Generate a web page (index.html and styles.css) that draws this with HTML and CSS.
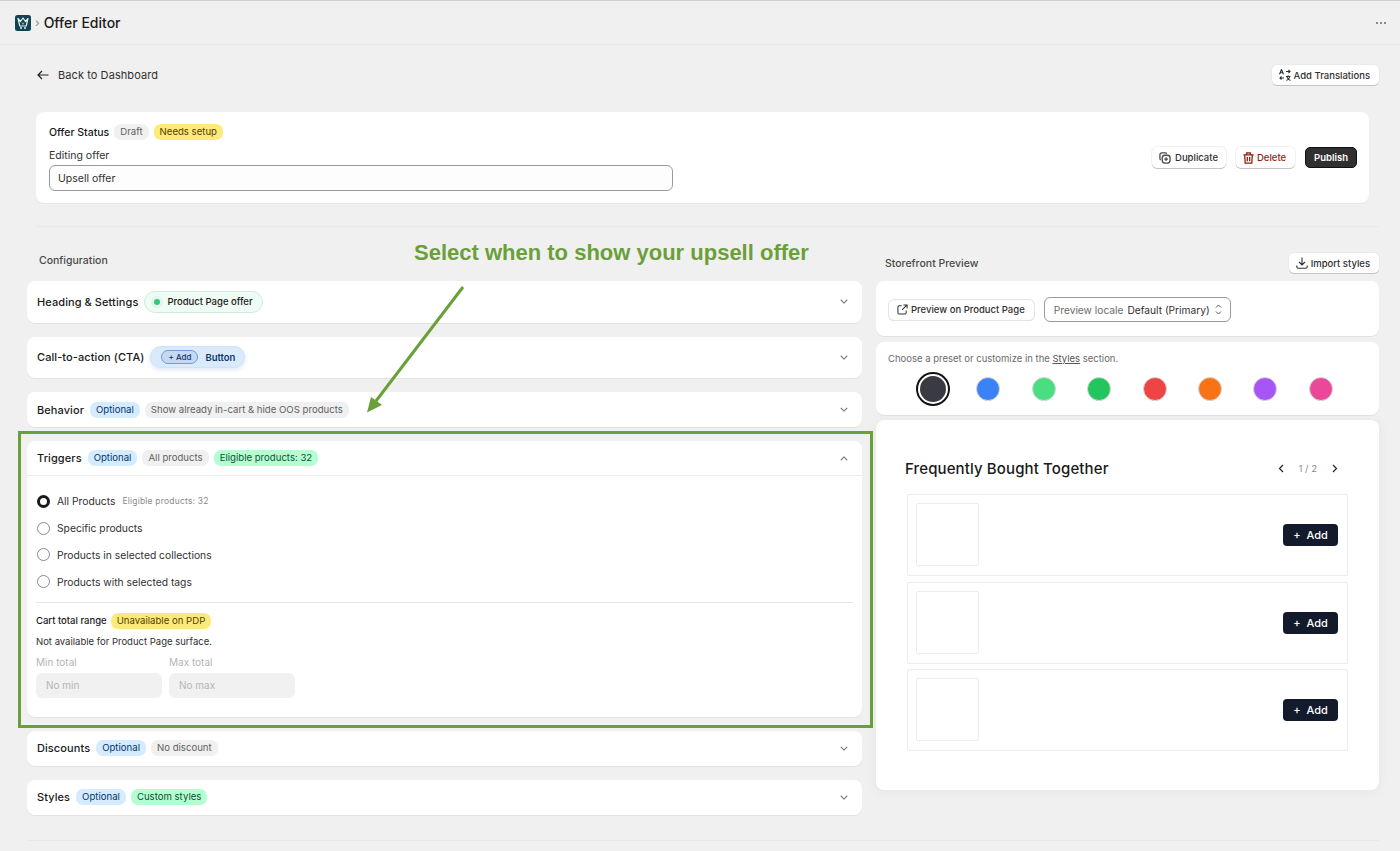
FILE: index.html
```html
<!doctype html>
<html lang="en">
  <head>
    <meta charset="UTF-8" />
    <meta name="viewport" content="width=device-width, initial-scale=1.0" />
    <title>Offer Editor</title>
    <link rel="stylesheet" href="styles.css">
  </head>
  <body>
    <header class="topbar">
      <div class="crumbs">
        <svg class="logo" width="16" height="16" viewBox="0 0 16 16">
          <rect width="16" height="16" rx="2.5" fill="#134252" />
          <path d="M3 3.500l1.800 7.500h6.400L13 3.500l-2.500 3L8 3 5.500 6.500z" fill="none" stroke="#e8f1f0" stroke-width="1.200" stroke-linejoin="round" />
          <path d="M7 7.500l1 2 1-2" fill="none" stroke="#7fb6c4" stroke-width="0.900" />
          <circle cx="6" cy="13" r="1" fill="#e8f1f0" />
          <circle cx="10" cy="13" r="1" fill="#e8f1f0" />
        </svg>
        <span class="crumb-sep">›</span>
        <span class="page-title">Offer Editor</span>
      </div>
      <div class="dots"><i></i><i></i><i></i></div>
    </header>

    <main class="page">
      <div class="back-row">
        <a class="back">
          <svg width="12" height="10" viewBox="0 0 12 10" fill="none" stroke="#1f2328" stroke-width="1.2"><path d="M11.5 5H1M5 1L1 5l4 4" /></svg>
          Back to Dashboard
        </a>
        <button class="btn">
          <svg width="12" height="12" viewBox="0 0 12 12" fill="none" stroke="#303030" stroke-width="1.100"><path d="M0.500 5.200L2.500 0.500 4.500 5.200M1.200 3.800h2.600M7 2.500h4M9.500 1L11 2.500 9.500 4M5 9H1M2.500 7.500L1 9l1.500 1.500M7 7.500h4.500M9.200 6.500v1M7.500 11.500C9.500 10.500 10.500 9 10.800 7.500M7.800 7.500c.4 1.800 2 3.300 3.700 4" /></svg>
          Add Translations
        </button>
      </div>

      <section class="status-card">
        <div class="status-left">
          <div class="status-line">
            <strong>Offer Status</strong>
            <span class="tag gray">Draft</span>
            <span class="tag yellow">Needs setup</span>
          </div>
          <label class="field-label">Editing offer</label>
          <div class="text-input">Upsell offer</div>
        </div>
        <div class="status-actions">
          <button class="btn tall">
            <svg width="12" height="12" viewBox="0 0 13 13" fill="none" stroke="#4a4a4a" stroke-width="1.400"><path d="M8.500 1.800A2 2 0 0 0 7 1H3a2 2 0 0 0-2 2v4c0 .7.3 1.200.8 1.600" /><rect x="3.500" y="3.500" width="8.500" height="8.500" rx="3" /><path d="M7.700 5.800v4M5.700 7.800h4" /></svg>
            Duplicate
          </button>
          <button class="btn tall danger">
            <svg width="11" height="12" viewBox="0 0 12 13" fill="none" stroke="#8e1f0b" stroke-width="1.400"><path d="M0.500 3h11M4 3V1h4v2M1.800 3l.6 9.200h7.200l.6-9.200M4.700 5.500v4.500M7.300 5.500v4.500" /></svg>
            Delete
          </button>
          <button class="btn tall dark">Publish</button>
        </div>
      </section>

      <hr class="rule" />

      <div class="columns">
        <div class="col-left">
          <div class="col-head"><h2 class="col-title">Configuration</h2></div>

          <section class="acc h41">
            <div class="acc-head">
              <span class="acc-title">Heading &amp; Settings</span>
              <span class="pill-mint"><i class="live-dot"></i>Product Page offer</span>
              <svg class="chev" width="8" height="5" viewBox="0 0 10 6"><path d="M1 1l4 4 4-4" /></svg>
            </div>
          </section>

          <section class="acc h41">
            <div class="acc-head">
              <span class="acc-title">Call-to-action (CTA)</span>
              <span class="pill-cta"><span class="mini-add">+ Add</span>Button</span>
              <svg class="chev" width="8" height="5" viewBox="0 0 10 6"><path d="M1 1l4 4 4-4" /></svg>
            </div>
          </section>

          <section class="acc">
            <div class="acc-head">
              <span class="acc-title">Behavior</span>
              <span class="tag blue">Optional</span>
              <span class="tag gray">Show already in-cart &amp; hide OOS products</span>
              <svg class="chev" width="8" height="5" viewBox="0 0 10 6"><path d="M1 1l4 4 4-4" /></svg>
            </div>
          </section>

          <section class="acc">
            <div class="acc-head open">
              <span class="acc-title">Triggers</span>
              <span class="tag blue">Optional</span>
              <span class="tag gray">All products</span>
              <span class="tag green">Eligible products: 32</span>
              <svg class="chev" width="8" height="5" viewBox="0 0 10 6"><path d="M1 5l4-4 4 4" /></svg>
            </div>
            <div class="acc-body">
              <div class="radio-row"><i class="radio on"></i>All Products <small>Eligible products: 32</small></div>
              <div class="radio-row"><i class="radio"></i>Specific products</div>
              <div class="radio-row"><i class="radio"></i>Products in selected collections</div>
              <div class="radio-row"><i class="radio"></i>Products with selected tags</div>
              <hr class="inner-rule" />
              <div class="cart-line"><strong>Cart total range</strong><span class="tag yellow">Unavailable on PDP</span></div>
              <p class="cart-note">Not available for Product Page surface.</p>
              <div class="range">
                <div class="range-field"><label>Min total</label><div class="range-input">No min</div></div>
                <div class="range-field"><label>Max total</label><div class="range-input">No max</div></div>
              </div>
            </div>
          </section>

          <section class="acc">
            <div class="acc-head">
              <span class="acc-title">Discounts</span>
              <span class="tag blue">Optional</span>
              <span class="tag gray">No discount</span>
              <svg class="chev" width="8" height="5" viewBox="0 0 10 6"><path d="M1 1l4 4 4-4" /></svg>
            </div>
          </section>

          <section class="acc">
            <div class="acc-head">
              <span class="acc-title">Styles</span>
              <span class="tag blue">Optional</span>
              <span class="tag green">Custom styles</span>
              <svg class="chev" width="8" height="5" viewBox="0 0 10 6"><path d="M1 1l4 4 4-4" /></svg>
            </div>
          </section>
        </div>

        <div class="col-right">
          <div class="col-head between">
            <h2 class="col-title">Storefront Preview</h2>
            <button class="btn">
              <svg width="12" height="12" viewBox="0 0 12 12" fill="none" stroke="#303030" stroke-width="1.1"><path d="M6 0.500v7M3 5l3 3 3-3M0.800 8.500v1.200c0 1 .6 1.600 1.600 1.600h7.200c1 0 1.600-.6 1.600-1.600V8.500" /></svg>
              Import styles
            </button>
          </div>

          <section class="panel preview-bar">
            <button class="btn flat">
              <svg width="11" height="11" viewBox="0 0 12 12" fill="none" stroke="#303030" stroke-width="1.1"><path d="M5 2H2.500A1.500 1.500 0 0 0 1 3.500v6A1.500 1.500 0 0 0 2.500 11h6A1.500 1.500 0 0 0 10 9.500V7M7 1h4v4M11 1L5.500 6.500" /></svg>
              Preview on Product Page
            </button>
            <div class="locale">
              <span class="locale-label">Preview locale</span>
              <span>Default (Primary)</span>
              <svg class="locale-arrows" width="7" height="11" viewBox="0 0 7 11" fill="none" stroke="#555" stroke-width="1"><path d="M1 3.500L3.500 1 6 3.500M1 7.500L3.500 10 6 7.500" /></svg>
            </div>
          </section>

          <section class="panel presets">
            <p class="presets-note">Choose a preset or customize in the <u>Styles</u> section.</p>
            <div class="swatches">
              <span class="swatch active"></span>
              <span class="swatch c-blue"></span>
              <span class="swatch c-mint"></span>
              <span class="swatch c-green"></span>
              <span class="swatch c-red"></span>
              <span class="swatch c-orange"></span>
              <span class="swatch c-purple"></span>
              <span class="swatch c-pink"></span>
            </div>
          </section>

          <section class="panel widget">
            <div class="widget-head">
              <h3>Frequently Bought Together</h3>
              <div class="pager">
                <svg width="6" height="9" viewBox="0 0 6 9" fill="none" stroke="#222" stroke-width="1.2"><path d="M5 1L1.500 4.500 5 8" /></svg>
                <span>1 / 2</span>
                <svg width="6" height="9" viewBox="0 0 6 9" fill="none" stroke="#222" stroke-width="1.2"><path d="M1 1l3.500 3.500L1 8" /></svg>
              </div>
            </div>
            <div class="product"><div class="thumb"></div><button class="add">+&nbsp; Add</button></div>
            <div class="product"><div class="thumb"></div><button class="add">+&nbsp; Add</button></div>
            <div class="product"><div class="thumb"></div><button class="add">+&nbsp; Add</button></div>
          </section>
        </div>
      </div>
      <hr class="rule bottom" />
    </main>

    <!-- annotation drawn over the screenshot -->
    <div class="note-text">Select when to show your upsell offer</div>
    <div class="note-box"></div>
    <svg class="note-arrow" width="110" height="130" viewBox="0 0 110 130">
      <path d="M103 2L16 116" stroke="#6b9f3a" stroke-width="3" fill="none" />
      <path d="M7 127.500l4-15.500 11 8z" fill="#6b9f3a" />
    </svg>
  </body>
</html>
```

FILE: styles.css
```css
* {
    box-sizing: border-box;
}

body {
    margin: 0;
    background-color: #f0f0f0;
    font-family: Inter, "Liberation Sans", sans-serif;
    font-size: 10.5px;
    color: #303030;
    position: relative;
    min-height: 851px;
    overflow: hidden;
}

button {
    font-family: inherit;
}

h2, h3, p {
    margin: 0;
}

/* top bar */
.topbar {
    height: 45px;
    border-top: 1px solid #cfcfcf;
    border-bottom: 1px solid #e6e6e6;
    display: flex;
    align-items: center;
    justify-content: space-between;
    padding: 0 14px 0 15px;
}
.crumbs {
    display: flex;
    align-items: center;
}
.crumb-sep {
    color: #8a8a8a;
    font-size: 12px;
    margin: 0 4px;
}
.page-title {
    font-size: 14px;
    font-weight: 500;
    color: #1a1a1a;
}
.dots {
    display: flex;
    gap: 2px;
}
.dots i {
    width: 2px;
    height: 2px;
    border-radius: 50%;
    background-color: #6a6a6a;
}

/* page */
.page {
    padding: 20px 21px 0 27px;
}
.back-row {
    display: flex;
    justify-content: space-between;
    align-items: center;
    height: 20px;
}
.back {
    display: flex;
    align-items: center;
    gap: 9px;
    margin-left: 10px;
    font-size: 11px;
    letter-spacing: 0.08px;
}

.btn {
    height: 20px;
    display: inline-flex;
    align-items: center;
    gap: 3px;
    padding: 0 9px 0 7px;
    border: none;
    border-radius: 5px;
    background-color: #fff;
    box-shadow: 0 1px 0 #c4c4c4, 0 0 0 0.5px #e3e3e3;
    font-size: 9.5px;
    font-weight: 500;
    color: #303030;
    white-space: nowrap;
}
.btn.tall {
    height: 21px;
    gap: 4px;
    padding-right: 8px;
}
.btn.danger {
    color: #8e1f0b;
    gap: 3px;
    padding-right: 9px;
}
.btn.dark {
    background-color: #303030;
    color: #fff;
    font-weight: 600;
    padding: 0 8px;
    border: 1px solid #111;
    box-shadow: none;
}

.status-card {
    margin: 27px 10px 0 9px;
    height: 91px;
    background-color: #fff;
    border-radius: 8px;
    box-shadow: 0 1px 0 #e6e6e6;
    padding: 12px 12px 0 13px;
    display: flex;
    justify-content: space-between;
    align-items: flex-start;
}
.status-left {
    width: 624px;
}
.status-line {
    display: flex;
    align-items: center;
    gap: 5px;
    height: 16px;
}
.status-line strong {
    font-weight: 500;
    color: #1a1a1a;
}
.field-label {
    display: block;
    margin-top: 9px;
    font-size: 10.5px;
    line-height: 13px;
}
.text-input {
    margin-top: 3px;
    height: 26px;
    border: 1px solid #9a9a9a;
    border-radius: 6px;
    background-color: #fdfdfd;
    padding: 0 8px;
    line-height: 25px;
    font-size: 10.5px;
}
.status-actions {
    display: flex;
    gap: 10px;
    margin-top: 23px;
}

.rule {
    border: none;
    border-top: 1px solid #e9e9e9;
    margin: 23px 0 0 9px;
    height: 0;
}

.tag {
    display: inline-block;
    height: 16px;
    line-height: 16px;
    padding: 0 6px;
    border-radius: 7px;
    font-size: 9.6px;
    white-space: nowrap;
}
.tag.gray {
    background-color: #f0f0f0;
    color: #616161;
}
.tag.yellow {
    background-color: #ffe97a;
    color: #4f4200;
}
.tag.blue {
    background-color: #d5ebff;
    color: #00356b;
}
.tag.green {
    background-color: #b4fed2;
    color: #0c5132;
}

/* columns */
.columns {
    display: grid;
    grid-template-columns: 835px 503px;
    gap: 14px;
    margin-top: 25px;
}
.col-head {
    height: 29px;
    display: flex;
    align-items: flex-start;
}
.col-head.between {
    justify-content: space-between;
    align-items: center;
    padding-bottom: 7px;
}
.col-title {
    font-size: 10.5px;
    font-weight: 500;
    color: #4a4a4a;
}
.col-left .col-title {
    margin: 2px 0 0 12px;
}
.col-right .col-title {
    margin-left: 9px;
}

/* accordion */
.acc {
    background-color: #fff;
    border-radius: 8px;
    box-shadow: 0 1px 0 #e2e2e2;
    margin-bottom: 14px;
}
.acc-head {
    height: 35px;
    display: flex;
    align-items: center;
    gap: 5px;
    padding: 0 14px 0 10px;
}
.acc.h41 .acc-head {
    height: 41.5px;
}
.acc-head.open {
    border-bottom: 1px solid #ececec;
}
.acc-title {
    font-size: 11px;
    font-weight: 500;
    color: #1a1a1a;
    letter-spacing: 0.08px;
    margin-right: 1px;
}
.chev {
    margin-left: auto;
    fill: none;
    stroke: #6e6e6e;
    stroke-width: 1.3;
}
.pill-mint {
    display: inline-flex;
    align-items: center;
    height: 22px;
    padding: 0 9px;
    border: 1px solid #cdeedd;
    border-radius: 11px;
    background-color: #f0fbf5;
    font-size: 9.5px;
    font-weight: 500;
    color: #1a1a1a;
}
.live-dot {
    width: 6px;
    height: 6px;
    border-radius: 50%;
    background-color: #34c77b;
    box-shadow: 0 0 0 3px #e1f6ea;
    margin-right: 7px;
}
.pill-cta {
    display: inline-flex;
    align-items: center;
    gap: 7px;
    height: 22px;
    padding: 0 9px 0 10px;
    border: 1px solid #cfe3f8;
    border-radius: 11px;
    background-color: #dbeafb;
    box-shadow: 0 2px 5px #dfe9f4;
    font-size: 9.5px;
    font-weight: 600;
    color: #0b3868;
}
.mini-add {
    height: 14px;
    line-height: 12px;
    padding: 0 6px;
    border: 1px solid #6f9bd6;
    border-radius: 7px;
    background-color: #c5d9f2;
    font-size: 8px;
    font-weight: 500;
}

.acc-body {
    padding: 12px 9px 19px 9px;
}
.radio-row {
    display: flex;
    align-items: center;
    height: 26.8px;
    font-size: 10.3px;
}
.radio-row small {
    margin-left: 7px;
    font-size: 8.5px;
    color: #8a8a8a;
    letter-spacing: 0.2px;
}
.radio {
    width: 13px;
    height: 13px;
    border: 1px solid #8a8a8a;
    border-radius: 50%;
    margin: 0 7px 0 1px;
    background-color: #fff;
}
.radio.on {
    border: 3.5px solid #1a1a1a;
}
.inner-rule {
    border: none;
    border-top: 1px solid #e6e6e6;
    margin: 6.8px 0 0 0;
}
.cart-line {
    display: flex;
    align-items: center;
    gap: 4px;
    margin-top: 10px;
    height: 16px;
}
.cart-line strong {
    font-size: 9.5px;
    font-weight: 500;
    color: #1a1a1a;
}
.cart-note {
    margin-top: 6px;
    font-size: 9.5px;
    line-height: 14px;
}
.range {
    display: flex;
    gap: 7px;
    margin-top: 6px;
}
.range-field {
    width: 126px;
}
.range-field label {
    display: block;
    font-size: 10px;
    line-height: 14px;
    color: #b5b5b5;
}
.range-input {
    margin-top: 4px;
    height: 25px;
    line-height: 25px;
    padding: 0 10px;
    border-radius: 6px;
    background-color: #f1f1f1;
    font-size: 10px;
    color: #b5b5b5;
}

/* preview side */
.panel {
    background-color: #fff;
    border-radius: 8px;
    box-shadow: 0 1px 0 #e0e0e0;
    margin-bottom: 6px;
}
.preview-bar {
    height: 55px;
    display: flex;
    align-items: center;
    gap: 10px;
    padding: 2px 13px 0;
}
.btn.flat {
    padding: 0 9px 0 8px;
    box-shadow: 0 0 0 1px #e3e3e3, 0 1px 0 #cfcfcf;
}
.locale {
    height: 25px;
    display: flex;
    align-items: center;
    gap: 4px;
    padding: 0 8px 0 9px;
    border: 1px solid #9a9a9a;
    border-radius: 6px;
    font-size: 10.2px;
}
.locale-label {
    color: #6b6b6b;
}
.locale-arrows {
    margin-left: 1px;
}
.presets {
    height: 73px;
    padding: 11px 12px 0;
    margin-bottom: 5px;
}
.presets-note {
    font-size: 9.5px;
    color: #6b6b6b;
    line-height: 12px;
}
.presets-note u {
    color: #555;
}
.swatches {
    display: flex;
    align-items: center;
    gap: 31.4px;
    margin: 11px 0 0 33px;
}
.swatch {
    width: 24px;
    height: 24px;
    border-radius: 50%;
    border: 1px solid #d8d8d8;
    background-color: #3a3a42;
}
.swatch.active {
    width: 26px;
    height: 26px;
    border: none;
    box-shadow: 0 0 0 2px #fff, 0 0 0 4px #111;
    margin: 0 -1px;
}
.c-blue { background-color: #3b82f6; }
.c-mint { background-color: #4ade80; }
.c-green { background-color: #22c55e; }
.c-red { background-color: #ef4444; }
.c-orange { background-color: #f97316; }
.c-purple { background-color: #a855f7; }
.c-pink { background-color: #ec4899; }

.widget {
    height: 370px;
    margin-bottom: 0;
    padding: 39px 31px 0 31px;
    box-shadow: 0 1px 10px #e4e4e4;
}
.widget-head {
    display: flex;
    justify-content: space-between;
    align-items: center;
    height: 19px;
    margin-bottom: 16px;
    padding-right: 10px;
    margin-left: -2px;
}
.widget-head h3 {
    font-size: 15px;
    font-weight: 500;
    color: #1a1a1a;
    letter-spacing: 0.12px;
}
.pager {
    display: flex;
    align-items: center;
    gap: 15px;
    font-size: 9.5px;
    color: #8a8a8a;
}
.product {
    height: 82px;
    margin-bottom: 5.5px;
    border: 1px solid #ececec;
    border-radius: 2px;
    padding: 8px 9px 0 8px;
    display: flex;
    justify-content: space-between;
    align-items: flex-start;
}
.thumb {
    width: 63px;
    height: 63px;
    border: 1px solid #ececec;
    border-radius: 2px;
}
.add {
    margin-top: 21px;
    width: 55px;
    height: 22px;
    border: none;
    border-radius: 4px;
    background-color: #131a2c;
    color: #fff;
    font-size: 11px;
    font-weight: 500;
}
.rule.bottom {
    margin: 11px 0 0 0;
}

/* annotation layer */
.note-text {
    position: absolute;
    left: 414px;
    top: 240px;
    font-family: "Liberation Sans", Arial, sans-serif;
    font-size: 22px;
    font-weight: 700;
    color: #6b9f3a;
    line-height: 25px;
    white-space: nowrap;
}
.note-box {
    position: absolute;
    left: 18px;
    top: 431px;
    width: 855px;
    height: 297px;
    border: 3px solid #6b9f3a;
}
.note-arrow {
    position: absolute;
    left: 360px;
    top: 285px;
}
```
